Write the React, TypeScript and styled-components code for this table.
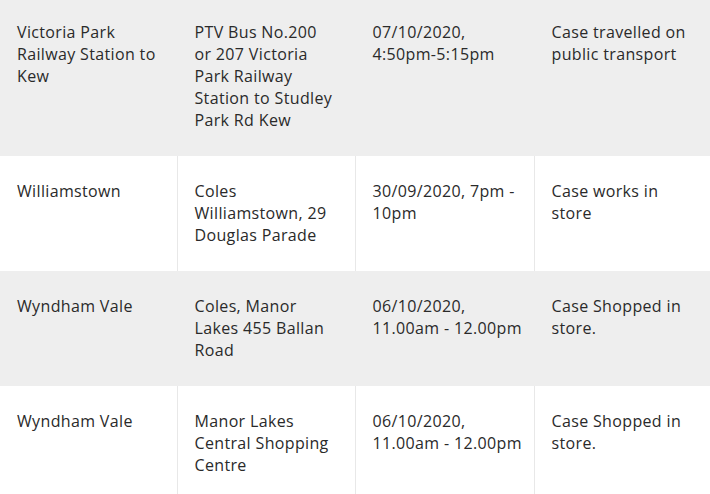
import React from "react";
import styled, { createGlobalStyle } from "styled-components";

const Global = createGlobalStyle`
  html, body { margin: 0; padding: 0; background: #ffffff; }
  body { overflow: hidden; }
`;

const Table = styled.table`
  width: 710px;
  margin-top: -3px;
  border-collapse: collapse;
  table-layout: fixed;
  font-family: "Open Sans", "Liberation Sans", sans-serif;
  font-size: 16px;
  letter-spacing: 0.35px;
  line-height: 22px;
  color: #2a2a2a;
`;

const Col = styled.col<{ $w: number }>`
  width: ${(p) => p.$w}px;
`;

const Row = styled.tr<{ $shaded: boolean }>`
  background: ${(p) => (p.$shaded ? "#eeeeee" : "#ffffff")};
`;

const Cell = styled.td<{ $shaded: boolean }>`
  vertical-align: top;
  padding: 24px 4px 25px 17px;
  border-left: 1px solid ${(p) => (p.$shaded ? "#eeeeee" : "#e8e8e8")};
  &:first-child { border-left: none; }
`;

const Line = styled.span`
  display: block;
  white-space: nowrap;
`;

const widths = [177, 178, 179, 176];

const rows: string[][][] = [
  [
    ["Victoria Park", "Railway Station to", "Kew"],
    ["PTV Bus No.200", "or 207 Victoria", "Park Railway", "Station to Studley", "Park Rd Kew"],
    ["07/10/2020,", "4:50pm-5:15pm"],
    ["Case travelled on", "public transport"],
  ],
  [
    ["Williamstown"],
    ["Coles", "Williamstown, 29", "Douglas Parade"],
    ["30/09/2020, 7pm -", "10pm"],
    ["Case works in", "store"],
  ],
  [
    ["Wyndham Vale"],
    ["Coles, Manor", "Lakes 455 Ballan", "Road"],
    ["06/10/2020,", "11.00am - 12.00pm"],
    ["Case Shopped in", "store."],
  ],
  [
    ["Wyndham Vale"],
    ["Manor Lakes", "Central Shopping", "Centre"],
    ["06/10/2020,", "11.00am - 12.00pm"],
    ["Case Shopped in", "store."],
  ],
];

export default function App() {
  return (
    <>
      <Global />
      <Table>
        <colgroup>
          {widths.map((w, i) => (
            <Col key={i} $w={w} />
          ))}
        </colgroup>
        <tbody>
          {rows.map((r, i) => (
            <Row key={i} $shaded={i % 2 === 0}>
              {r.map((c, j) => (
                <Cell key={j} $shaded={i % 2 === 0}>
                  {c.map((l, k) => (
                    <Line key={k}>{l}</Line>
                  ))}
                </Cell>
              ))}
            </Row>
          ))}
        </tbody>
      </Table>
    </>
  );
}
